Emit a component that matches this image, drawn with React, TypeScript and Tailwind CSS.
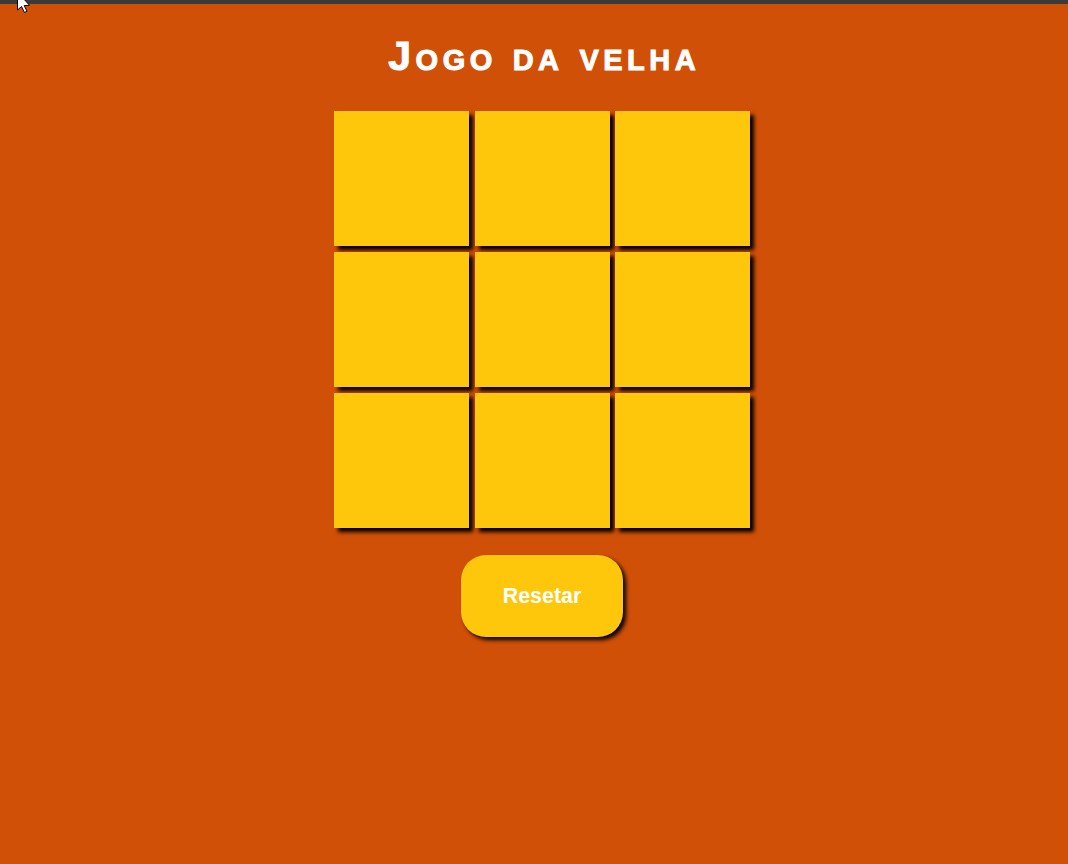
import React, { useState } from 'react';

type Cell = 'X' | 'O' | null;

export default function App() {
  const [cells, setCells] = useState<Cell[]>(Array(9).fill(null));
  const [turn, setTurn] = useState<'X' | 'O'>('X');

  const play = (i: number) => {
    if (cells[i]) return;
    const next = [...cells];
    next[i] = turn;
    setCells(next);
    setTurn(turn === 'X' ? 'O' : 'X');
  };

  const reset = () => {
    setCells(Array(9).fill(null));
    setTurn('X');
  };

  return (
    <div className="relative min-h-[864px] bg-[#d15008] font-['Liberation_Sans',Arial,sans-serif]">
      <div className="h-1 bg-[#3b3b3b]" />
      {/* mouse cursor from the capture */}
      <svg className="absolute left-[16px] top-0" width="20" height="14" viewBox="0 0 20 14">
        <path d="M1.5 -8 L1.5 10 L5.5 6.5 L8.5 12.5 L11 11.3 L8.2 5.6 L13.5 5.3 Z" fill="#fff" stroke="#000" strokeWidth="1" />
      </svg>
      <div className="flex flex-col items-center pl-4">
        <h1 className="mt-[29px] pl-[4.5px] text-[41px] font-bold text-white leading-[46px] tracking-[4.5px] [font-variant:small-caps] [-webkit-text-stroke:1px_white]">
          Jogo da velha
        </h1>
        <div className="mt-[32px] grid grid-cols-[repeat(3,135px)] gap-x-[5.5px] gap-y-[6px]">
          {cells.map((c, i) => (
            <button
              key={i}
              onClick={() => play(i)}
              className="flex h-[135px] w-[135px] items-center justify-center bg-[#ffc70c] text-6xl font-bold text-white shadow-[4px_4px_4px_#000]"
            >
              {c}
            </button>
          ))}
        </div>
        <button
          onClick={reset}
          className="mt-[27px] h-[82px] w-[162px] rounded-[25px] bg-[#ffc70c] text-[21.4px] font-bold text-white shadow-[3px_3px_4px_#000]"
        >
          Resetar
        </button>
      </div>
    </div>
  );
}
